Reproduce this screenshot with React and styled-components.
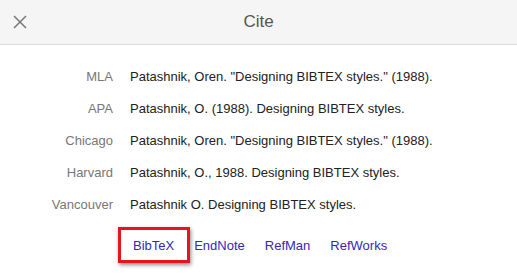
import styled, { createGlobalStyle } from "styled-components";

const GlobalStyle = createGlobalStyle`
  html, body {
    margin: 0;
    padding: 0;
    background: #fff;
    font-family: "Liberation Sans", Arial, sans-serif;
  }
`;

const citations = [
  { style: "MLA", text: 'Patashnik, Oren. "Designing BIBTEX styles." (1988).' },
  { style: "APA", text: "Patashnik, O. (1988). Designing BIBTEX styles." },
  { style: "Chicago", text: 'Patashnik, Oren. "Designing BIBTEX styles." (1988).' },
  { style: "Harvard", text: "Patashnik, O., 1988. Designing BIBTEX styles." },
  { style: "Vancouver", text: "Patashnik O. Designing BIBTEX styles." },
];

const links = ["BibTeX", "EndNote", "RefMan", "RefWorks"];

export default function App() {
  return (
    <>
      <GlobalStyle />
      <Dialog>
        <Header>
          <CloseButton aria-label="Close">
            <svg width="14" height="14" viewBox="0 0 14 14">
              <path d="M1 1L13 13M13 1L1 13" stroke="#777" strokeWidth="1.5" fill="none" />
            </svg>
          </CloseButton>
          <Title>Cite</Title>
        </Header>
        <Body>
          <CiteTable>
            {citations.map((c) => (
              <Row key={c.style}>
                <Label>{c.style}</Label>
                <Citation>{c.text}</Citation>
              </Row>
            ))}
          </CiteTable>
          <Links>
            {links.map((l, i) => (
              <ExportLink key={l} href="#" $highlighted={i === 0}>
                {l}
              </ExportLink>
            ))}
          </Links>
        </Body>
      </Dialog>
    </>
  );
}

const Dialog = styled.div`
  width: 517px;
  height: 277px;
  background: #fff;
  overflow: hidden;
`;

const Header = styled.div`
  height: 44px;
  background: #f5f5f5;
  border-bottom: 1px solid #dcdcdc;
  display: flex;
  align-items: center;
  justify-content: center;
  position: relative;
`;

const CloseButton = styled.button`
  position: absolute;
  left: 13px;
  top: 15px;
  width: 16px;
  height: 14px;
  padding: 0;
  border: 0;
  background: none;
  display: flex;
  cursor: pointer;
`;

const Title = styled.h1`
  margin: 0;
  font-weight: normal;
  font-size: 17px;
  color: #555;
`;

const Body = styled.div`
  padding-top: 16px;
`;

const CiteTable = styled.div`
  display: grid;
  grid-template-columns: 113px 1fr;
  column-gap: 17px;
`;

const Row = styled.div`
  display: contents;
`;

const Label = styled.div`
  height: 32px;
  line-height: 32px;
  text-align: right;
  font-size: 13px;
  color: #777;
`;

const Citation = styled.div`
  height: 32px;
  line-height: 32px;
  font-size: 13px;
  color: #222;
`;

const Links = styled.div`
  display: flex;
  gap: 20px;
  padding-left: 133px;
  margin-top: 6px;
  height: 36px;
  align-items: center;
`;

const ExportLink = styled.a`
  position: relative;
  font-size: 13px;
  color: #3527b5;
  text-decoration: none;

  ${({ $highlighted }) =>
    $highlighted &&
    `
    &::after {
      content: "";
      position: absolute;
      left: -15px;
      right: -16px;
      top: -11px;
      bottom: -10px;
      border: 3px solid #e8141c;
      box-shadow: 1px 2px 4px rgba(0, 0, 0, 0.45);
    }
  `}
`;
